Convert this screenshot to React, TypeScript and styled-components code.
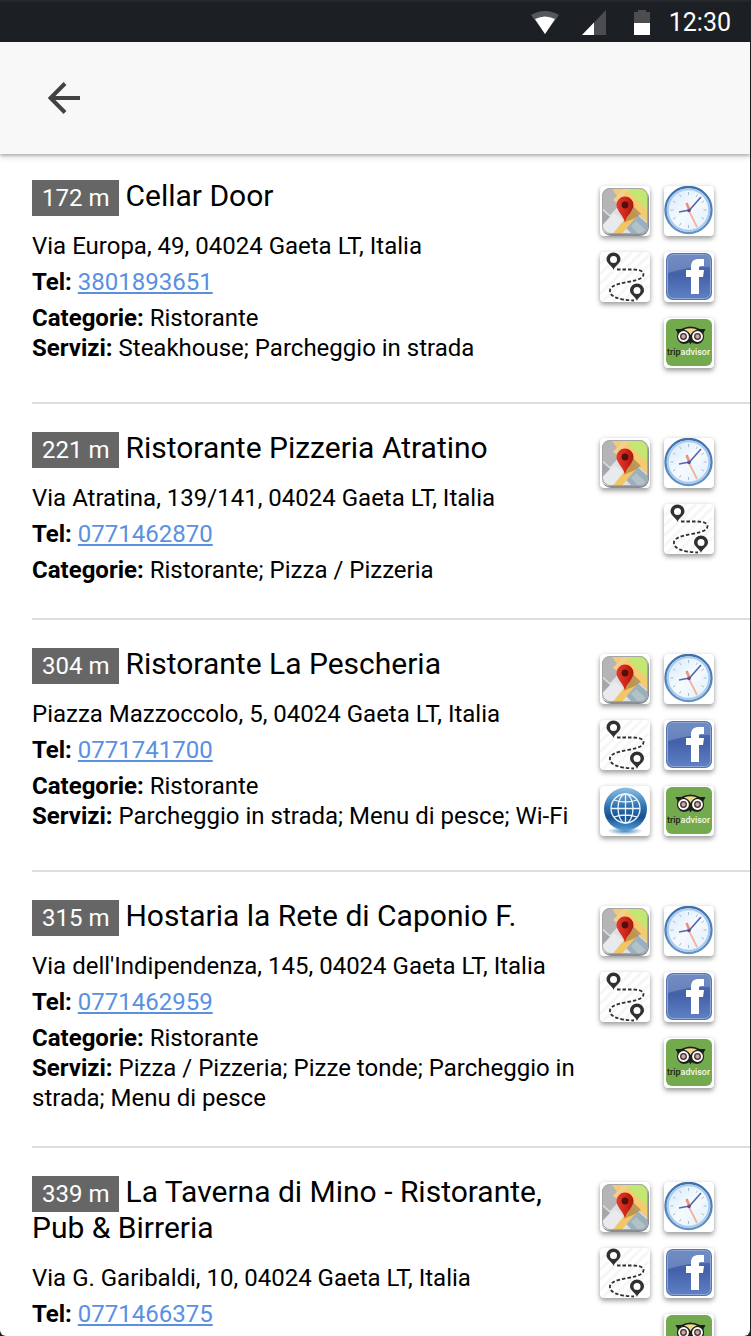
import React from "react";
import styled, { createGlobalStyle } from "styled-components";

const GlobalStyle = createGlobalStyle`
  *, *::before, *::after { box-sizing: border-box; }
  body {
    margin: 0;
    background: #1c1f24;
    color: #000;
    font-family: Roboto, "Liberation Sans", sans-serif;
    font-size: 24px;
    line-height: 30px;
  }
`;

const Screen = styled.div`
  display: flex;
  flex-direction: column;
  height: 100vh;
  overflow: hidden;
  padding-right: 1px;
`;

const StatusBar = styled.div`
  flex: none;
  display: flex;
  align-items: center;
  justify-content: flex-end;
  height: 42px;
  padding: 2px 19px 0 0;
  border-top: 2px solid #25292e;
  background: #1c1f24;
  color: #fff;
  font-size: 25px;
`;

const StatusIcons = styled.div`
  display: flex;
  align-items: center;
  gap: 22px;
  margin-right: 14px;
`;

const Header = styled.header`
  flex: none;
  position: relative;
  display: flex;
  align-items: center;
  height: 112px;
  padding: 0 40px;
  background: #f8f8f8;
  box-shadow: 0 2px 2px rgba(0, 0, 0, 0.16), 0 3px 6px rgba(0, 0, 0, 0.16);
`;

const BackButton = styled.button`
  display: flex;
  align-items: center;
  justify-content: center;
  width: 48px;
  height: 48px;
  padding: 0;
  border: 0;
  background: transparent;
  cursor: pointer;
`;

const List = styled.main`
  flex: 1;
  min-height: 0;
  overflow: hidden;
  padding-left: 32px;
  background: #fff;
  border-radius: 0 0 6px 6px;
`;

const Item = styled.article`
  display: flex;
  align-items: flex-start;
  padding: 26px 36px 33px 0;
  border-bottom: 2px solid #dedede;

  &:first-child { padding-top: 24px; }
`;

const Details = styled.div`
  flex: 1;
  min-width: 0;
`;

const Title = styled.h2`
  margin: 0 0 17px;
  font-size: 30px;
  font-weight: 400;
  line-height: 36px;
`;

const Distance = styled.span`
  margin-right: 6px;
  padding: 4px 10px;
  background: #666;
  color: #fff;
  font-size: 24px;
  line-height: 30px;
`;

const Line = styled.p<{ $spaced?: boolean }>`
  margin: 0 0 ${(p) => (p.$spaced ? 6 : 0)}px;
`;

const PhoneLink = styled.a`
  color: #5990e2;
  text-decoration: underline;
  text-decoration-thickness: 2px;
  text-underline-offset: 2px;
`;

const Actions = styled.nav`
  flex: none;
  display: flex;
  flex-wrap: wrap;
  justify-content: flex-end;
  gap: 16px 14px;
  width: 114px;
  margin: 8px 0 1px 18px;
`;

const Tile = styled.a`
  display: block;
  width: 50px;
  height: 50px;
  border-radius: 4px;
  background: #fff;
  box-shadow: 0 3px 5px rgba(0, 0, 0, 0.34), 0 0 4px rgba(0, 0, 0, 0.1);

  svg { display: block; }
`;

const MapArt = () => (
  <svg width="50" height="50" viewBox="0 0 50 50" aria-hidden="true">
    <defs>
      <clipPath id="map-face"><rect x="2" y="2" width="46" height="46" rx="8" /></clipPath>
      <linearGradient id="map-pin" x1="0" x2="1">
        <stop offset="0" stopColor="#e23a2c" />
        <stop offset="0.5" stopColor="#d4261b" />
        <stop offset="1" stopColor="#a81710" />
      </linearGradient>
    </defs>
    <rect x="2" y="3" width="47" height="47" rx="9" fill="#8b8d90" />
    <g clipPath="url(#map-face)">
      <rect width="50" height="50" fill="#dfe0e4" />
      <path d="M0 0H14L24 14L10 29L0 20Z" fill="#b5b5b8" />
      <path d="M0 22L10 31L0 42Z" fill="#a6a7ab" />
      <path d="M0 42L14 27L28 38L18 50H0Z" fill="#e9eaee" />
      <path d="M20 0H50V34L38 22L22 10Z" fill="#c3e772" />
      <path d="M10 0H23L50 27V38L34 25L20 14Z" fill="#f3cb70" />
      <path d="M24 2H30L17 17L13 14Z" fill="#f0d190" />
      <path d="M33 25L50 40V50H34L24 40Z" fill="#9cafbd" />
      <path d="M32 24L38 29L20 50H11Z" fill="#f1c765" />
      <path d="M31 40L36 35L50 48V50H40Z" fill="#b3c1cb" />
      <path d="M25 36L33 20L41 28L33 33Z" fill="#8b6437" opacity="0.5" />
    </g>
    <rect x="2.5" y="2.5" width="45" height="45" rx="8" fill="none" stroke="#a3a5a6" />
    <path d="M25 37C24 30 16.5 25 16.5 19A8.5 8.5 0 0 1 33.5 19C33.5 25 26 30 25 37Z" fill="url(#map-pin)" />
    <circle cx="25" cy="19" r="3.4" fill="#51100c" />
  </svg>
);

const ClockArt = () => (
  <svg width="50" height="50" viewBox="0 0 50 50" aria-hidden="true">
    <defs>
      <linearGradient id="clock-rim" x1="0" y1="0" x2="0" y2="1">
        <stop offset="0" stopColor="#3f6ea8" />
        <stop offset="1" stopColor="#6394c8" />
      </linearGradient>
      <linearGradient id="clock-face" x1="0" y1="0" x2="1" y2="1">
        <stop offset="0" stopColor="#d3e7f9" />
        <stop offset="0.5" stopColor="#f6fafe" />
        <stop offset="1" stopColor="#dceefa" />
      </linearGradient>
    </defs>
    <circle cx="24.5" cy="24" r="23" fill="url(#clock-face)" stroke="url(#clock-rim)" strokeWidth="2.4" />
    <circle cx="24.5" cy="24" r="20.8" fill="none" stroke="#a9cbee" strokeWidth="2" />
    <path d="M24.5 6V9M24.5 39V42M6.5 24H9.5M39.5 24H42.5M15.5 8.5L17 11M33.5 8.5L32 11M9 15L11.5 16.5M40 15L37.5 16.5M9 33L11.5 31.5M40 33L37.5 31.5M15.5 39.5L17 37" stroke="#a9bed2" strokeWidth="1" />
    <path d="M25 25L33 41" stroke="#f3b39c" strokeWidth="1.8" />
    <path d="M22.5 17L25 23" stroke="#f08f74" strokeWidth="2.6" />
    <path d="M15 26L25.5 24L37 11" fill="none" stroke="#5a66ac" strokeWidth="1.7" />
    <circle cx="25" cy="24.5" r="1.8" fill="#4a55a8" />
  </svg>
);

const RouteArt = () => (
  <svg width="50" height="50" viewBox="0 0 50 50" aria-hidden="true">
    <path d="M0 12L12 0M0 22L22 0M0 32L32 0M0 42L42 0M3 49L49 3M13 49L49 13M23 49L49 23M33 49L49 33" stroke="#f6f6f6" strokeWidth="3" />
    <path d="M17 17.5H33C41 17.5 45 20 43 24C40 31 12 29 10 38C9 45 20 48 34 48.5" fill="none" stroke="#303030" strokeWidth="1.8" strokeDasharray="3.5 2" />
    <path d="M13.5 18C12.5 14 6.5 11.5 6.5 7.5A7 7 0 0 1 20.5 7.5C20.5 11.5 14.5 14 13.5 18Z" fill="#303030" />
    <circle cx="13.5" cy="7.5" r="3.5" fill="#fff" />
    <path d="M37 49C36 45 30 42.5 30 38.5A7 7 0 0 1 44 38.5C44 42.5 38 45 37 49Z" fill="#303030" />
    <circle cx="37" cy="38.5" r="3.5" fill="#fff" />
  </svg>
);

const FacebookArt = () => (
  <svg width="50" height="50" viewBox="0 0 50 50" aria-hidden="true">
    <defs>
      <linearGradient id="fb-face" x1="0" y1="0" x2="0" y2="1">
        <stop offset="0" stopColor="#5a76b5" />
        <stop offset="0.45" stopColor="#4360a9" />
        <stop offset="1" stopColor="#5f80c4" />
      </linearGradient>
    </defs>
    <rect x="2" y="1" width="46" height="47" rx="7" fill="#5474b2" />
    <rect x="3.5" y="2.5" width="43" height="44" rx="6" fill="url(#fb-face)" stroke="#8fa7d4" />
    <path d="M4 8Q4 3 9 3H41Q46 3 46 8V15Q25 14 4 21Z" fill="#8aa1d0" opacity="0.5" />
    <path d="M27 42V25H22V18H27V15C27 9 30 7 35 7H40V14H37C35 14 35 15 35 16V18H40L39 25H35V42Z" fill="#fff" />
  </svg>
);

const GlobeArt = () => (
  <svg width="50" height="50" viewBox="0 0 50 50" aria-hidden="true">
    <defs>
      <linearGradient id="globe-ball" x1="0" y1="0" x2="0" y2="1">
        <stop offset="0" stopColor="#8fc0e3" />
        <stop offset="0.45" stopColor="#2e70ae" />
        <stop offset="0.7" stopColor="#18508f" />
        <stop offset="1" stopColor="#50a2dc" />
      </linearGradient>
      <radialGradient id="globe-shade">
        <stop offset="0" stopColor="#4b84b6" />
        <stop offset="1" stopColor="#fff" />
      </radialGradient>
    </defs>
    <ellipse cx="25" cy="45" rx="18" ry="4" fill="url(#globe-shade)" />
    <circle cx="25.5" cy="23" r="21.5" fill="url(#globe-ball)" />
    <g fill="none" stroke="#e9f5ff" strokeWidth="1.3">
      <circle cx="25.5" cy="22.5" r="14.5" />
      <ellipse cx="25.5" cy="22.5" rx="7.5" ry="14.5" />
      <path d="M25.5 8V37M11 22.5H40M14 14Q25.5 18 37 14M14 31Q25.5 27 37 31" />
    </g>
  </svg>
);

const TripAdvisorArt = () => (
  <svg width="50" height="50" viewBox="0 0 50 50" aria-hidden="true">
    <rect x="2" y="1" width="46" height="47" rx="6" fill="#74aa4e" />
    <path d="M11.5 11H17Q26.5 6 36 11H41.5L39.5 15Q42 24 33.5 26Q29 26 26.5 23Q24 26 19.5 26Q11 24 13.5 15Z" fill="#1d211a" />
    <path d="M20 11.5Q26.5 9 33 11.5Q28 13 26.5 17Q25 13 20 11.5Z" fill="#f1d88b" />
    <circle cx="19.5" cy="18.5" r="5.4" fill="#fff" />
    <circle cx="33.5" cy="18.5" r="5.4" fill="#fff" />
    <circle cx="19.5" cy="18.5" r="2.8" fill="#dba0a2" stroke="#39342f" strokeWidth="1.3" />
    <circle cx="33.5" cy="18.5" r="2.8" fill="#dba0a2" stroke="#39342f" strokeWidth="1.3" />
    <path d="M24.5 23L26.5 26.5L28.5 23Z" fill="#20231e" />
    <text x="3" y="37" fontFamily="Roboto, sans-serif" fontSize="9" fontWeight="500" fill="#182311">
      trip<tspan fill="#f1f8e8">advisor</tspan>
    </text>
  </svg>
);

const actions = {
  map: { label: "Mappa", Art: MapArt },
  hours: { label: "Orari", Art: ClockArt },
  route: { label: "Percorso", Art: RouteArt },
  facebook: { label: "Facebook", Art: FacebookArt },
  web: { label: "Sito web", Art: GlobeArt },
  tripadvisor: { label: "TripAdvisor", Art: TripAdvisorArt },
};

type Action = keyof typeof actions;

interface Place {
  distance: string;
  name: string;
  address: string;
  phone: string;
  categories?: string;
  services?: string;
  links: Action[];
}

const places: Place[] = [
  {
    distance: "172 m",
    name: "Cellar Door",
    address: "Via Europa, 49, 04024 Gaeta LT, Italia",
    phone: "3801893651",
    categories: "Ristorante",
    services: "Steakhouse; Parcheggio in strada",
    links: ["map", "hours", "route", "facebook", "tripadvisor"],
  },
  {
    distance: "221 m",
    name: "Ristorante Pizzeria Atratino",
    address: "Via Atratina, 139/141, 04024 Gaeta LT, Italia",
    phone: "0771462870",
    categories: "Ristorante; Pizza / Pizzeria",
    links: ["map", "hours", "route"],
  },
  {
    distance: "304 m",
    name: "Ristorante La Pescheria",
    address: "Piazza Mazzoccolo, 5, 04024 Gaeta LT, Italia",
    phone: "0771741700",
    categories: "Ristorante",
    services: "Parcheggio in strada; Menu di pesce; Wi-Fi",
    links: ["map", "hours", "route", "facebook", "web", "tripadvisor"],
  },
  {
    distance: "315 m",
    name: "Hostaria la Rete di Caponio F.",
    address: "Via dell'Indipendenza, 145, 04024 Gaeta LT, Italia",
    phone: "0771462959",
    categories: "Ristorante",
    services: "Pizza / Pizzeria; Pizze tonde; Parcheggio in strada; Menu di pesce",
    links: ["map", "hours", "route", "facebook", "tripadvisor"],
  },
  {
    distance: "339 m",
    name: "La Taverna di Mino - Ristorante, Pub & Birreria",
    address: "Via G. Garibaldi, 10, 04024 Gaeta LT, Italia",
    phone: "0771466375",
    links: ["map", "hours", "route", "facebook", "tripadvisor"],
  },
];

const PlaceItem = ({ place }: { place: Place }) => (
  <Item>
    <Details>
      <Title>
        <Distance>{place.distance}</Distance>
        {place.name}
      </Title>
      <Line $spaced>{place.address}</Line>
      <Line $spaced>
        <b>Tel:</b> <PhoneLink href={`tel:${place.phone}`}>{place.phone}</PhoneLink>
      </Line>
      {place.categories && <Line><b>Categorie:</b> {place.categories}</Line>}
      {place.services && <Line><b>Servizi:</b> {place.services}</Line>}
    </Details>
    <Actions aria-label={place.name}>
      {place.links.map((key) => {
        const { label, Art } = actions[key];
        return <Tile key={key} href={`#${key}`} aria-label={label}><Art /></Tile>;
      })}
    </Actions>
  </Item>
);

export default function App() {
  return (
    <>
      <GlobalStyle />
      <Screen>
        <StatusBar>
          <StatusIcons>
            <svg width="28" height="26" viewBox="0 0 28 26" aria-hidden="true">
              <path d="M0 5Q14 -3 28 5L14 24Z" fill="#55585c" />
              <path d="M4 9Q14 4 24 9L14 24Z" fill="#fff" />
            </svg>
            <svg width="26" height="26" viewBox="0 0 26 26" aria-hidden="true">
              <path d="M25 0V25H1Z" fill="#4b4d50" />
              <path d="M13 12.5V25H1Z" fill="#fff" />
            </svg>
            <svg width="26" height="26" viewBox="0 0 26 26" aria-hidden="true">
              <path d="M5 2H9V0H17V2H21V13H5Z" fill="#4b4d50" />
              <path d="M5 13H21V25H5Z" fill="#fff" />
            </svg>
          </StatusIcons>
          <time>12:30</time>
        </StatusBar>
        <Header>
          <BackButton type="button" aria-label="Indietro">
            <svg width="32" height="32" viewBox="0 0 32 32" aria-hidden="true">
              <path d="M32 16H3M17 1.5L2.5 16L17 30.5" fill="none" stroke="#424242" strokeWidth="4" />
            </svg>
          </BackButton>
        </Header>
        <List>
          {places.map((place) => <PlaceItem key={place.phone} place={place} />)}
        </List>
      </Screen>
    </>
  );
}
